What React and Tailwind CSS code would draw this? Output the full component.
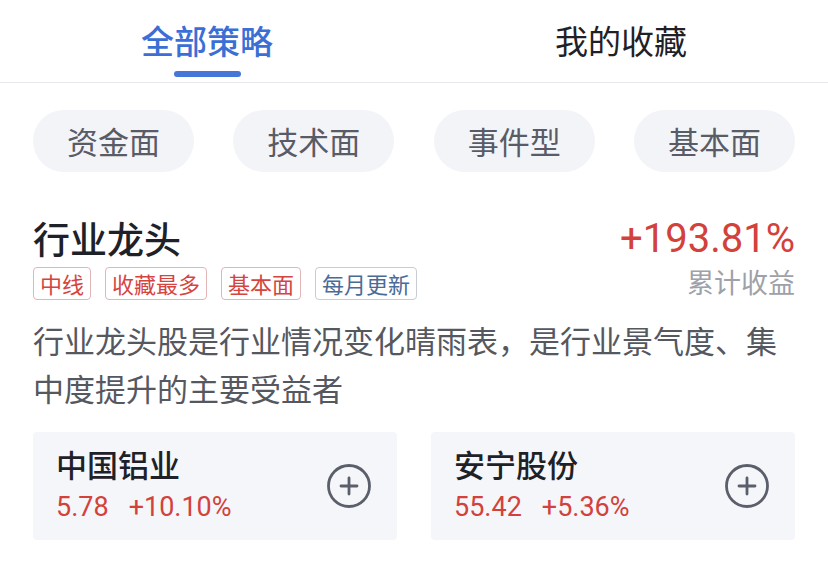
const cats = ["资金面", "技术面", "事件型", "基本面"];

const tags = [
  { label: "中线", tone: "red" },
  { label: "收藏最多", tone: "red" },
  { label: "基本面", tone: "red" },
  { label: "每月更新", tone: "blue" },
];

const stocks = [
  { name: "中国铝业", price: "5.78", change: "+10.10%" },
  { name: "安宁股份", price: "55.42", change: "+5.36%" },
];

const num = { fontFamily: 'Roboto, "Noto Sans", sans-serif' };

function PlusCircle() {
  return (
    <svg width="46" height="46" viewBox="0 0 46 46" fill="none">
      <circle cx="23" cy="23" r="20.5" stroke="#5b5f6b" strokeWidth="2.8" />
      <path d="M23 15v16M15 23h16" stroke="#5b5f6b" strokeWidth="2.8" strokeLinecap="round" />
    </svg>
  );
}

export default function App() {
  return (
    <div
      className="w-[828px] h-[562px] bg-white overflow-hidden"
      style={{ fontFamily: '"Noto Sans CJK SC", "Noto Sans", sans-serif' }}
    >
      {/* tabs */}
      <div className="flex h-[83px] border-b border-[#e8e9ec]">
        <div className="flex-1 flex flex-col items-center">
          <span className="mt-[18px] text-[33px] leading-[44px] text-[#3b6fd6] font-medium">全部策略</span>
          <span className="mt-[9px] w-[67px] h-[6px] rounded-full bg-[#4677d8]"></span>
        </div>
        <div className="flex-1 flex flex-col items-center">
          <span className="mt-[18px] text-[33px] leading-[44px] text-[#1f2126]">我的收藏</span>
        </div>
      </div>

      {/* category pills */}
      <div className="flex justify-between px-[33px] mt-[27px]">
        {cats.map((c) => (
          <div
            key={c}
            className="w-[161px] h-[62px] rounded-[31px] bg-[#f3f4f8] flex items-center justify-center text-[31px] text-[#595c66]"
          >
            {c}
          </div>
        ))}
      </div>

      {/* strategy */}
      <div className="px-[33px] mt-[42px]">
        <div className="flex justify-between items-start">
          <div>
            <div className="text-[37px] leading-[48px] text-[#1e2228] font-medium">行业龙头</div>
            <div className="flex gap-[14px] mt-[5px]">
              {tags.map((t) => (
                <span
                  key={t.label}
                  className={
                    t.tone === "red"
                      ? "h-[33px] px-[6px] flex items-center rounded-[4px] border border-[#e2b5b6] text-[22px] text-[#d5443f]"
                      : "h-[33px] px-[6px] flex items-center rounded-[4px] border border-[#c8ccd5] text-[22px] text-[#4b6b97]"
                  }
                >
                  {t.label}
                </span>
              ))}
            </div>
          </div>
          <div className="flex flex-col items-end">
            <div className="text-[40px] leading-[50px] text-[#d3413c]" style={num}>+193.81%</div>
            <div className="text-[27px] leading-[36px] text-[#9da1a9]">累计收益</div>
          </div>
        </div>

        <p className="mt-[16px] text-[31px] leading-[48px] text-[#55585f]">
          行业龙头股是行业情况变化晴雨表，是行业景气度、集中度提升的主要受益者
        </p>

        <div className="flex gap-[34px] mt-[20px]">
          {stocks.map((s) => (
            <div
              key={s.name}
              className="flex-1 h-[108px] bg-[#f5f6f9] rounded-[4px] flex items-center justify-between pl-[23px] pr-[25px]"
            >
              <div className="flex flex-col -mt-[4px]">
                <span className="text-[31px] leading-[36px] text-[#1e2228] font-medium">{s.name}</span>
                <span className="flex gap-[20px] mt-[10px] text-[27px] leading-[30px] text-[#d3413c]" style={num}>
                  <span>{s.price}</span>
                  <span>{s.change}</span>
                </span>
              </div>
              <PlusCircle />
            </div>
          ))}
        </div>
      </div>
    </div>
  );
}
